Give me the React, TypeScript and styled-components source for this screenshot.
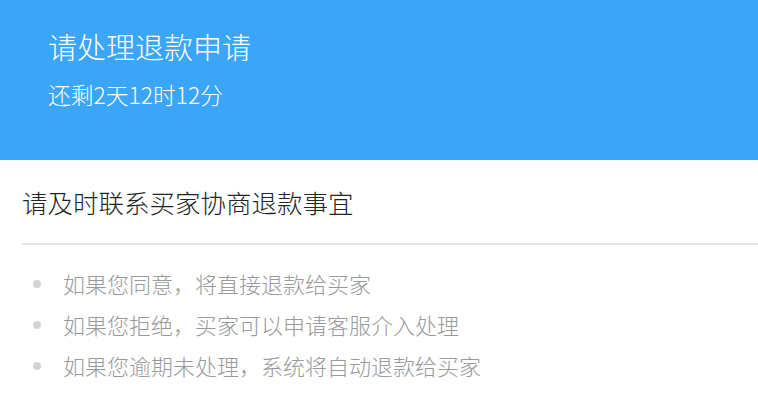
import React from "react";
import styled, { createGlobalStyle } from "styled-components";

const GlobalStyle = createGlobalStyle`
  html, body {
    margin: 0;
    padding: 0;
    background: #ffffff;
    font-family: "Noto Sans CJK SC", "Noto Sans", sans-serif;
  }
`;

const tips = [
  "如果您同意，将直接退款给买家",
  "如果您拒绝，买家可以申请客服介入处理",
  "如果您逾期未处理，系统将自动退款给买家",
];

const App: React.FC = () => {
  return (
    <Page>
      <GlobalStyle />
      <Header>
        <Title>请处理退款申请</Title>
        <Countdown>还剩2天12时12分</Countdown>
      </Header>
      <Section>
        <SectionTitle>请及时联系买家协商退款事宜</SectionTitle>
        <Divider />
        <TipList>
          {tips.map((tip) => (
            <TipItem key={tip}>
              <Dot />
              <TipText>{tip}</TipText>
            </TipItem>
          ))}
        </TipList>
      </Section>
    </Page>
  );
};

const Page = styled.div`
  width: 758px;
  height: 400px;
  overflow: hidden;
  background: #ffffff;
  font-weight: 300;
`;

const Header = styled.div`
  height: 160px;
  box-sizing: border-box;
  padding: 26px 0 0 48px;
  background: #3ba6f8;
  display: flex;
  flex-direction: column;
  gap: 14px;
`;

const Title = styled.div`
  color: #ffffff;
  font-size: 29px;
  line-height: 40px;
`;

const Countdown = styled.div`
  color: #ffffff;
  font-size: 22.8px;
  line-height: 30px;
`;

const Section = styled.div`
  padding: 22px 0 0 22px;
  background: linear-gradient(#fbfbfa, #ffffff 14px);
`;

const SectionTitle = styled.div`
  color: #222426;
  font-size: 25.5px;
  line-height: 40px;
`;

const Divider = styled.div`
  margin-top: 21px;
  height: 2px;
  background: #e6e6e6;
`;

const TipList = styled.ul`
  list-style: none;
  margin: 0;
  padding: 18px 0 0 0;
`;

const TipItem = styled.li`
  display: flex;
  align-items: center;
  height: 41px;
`;

const Dot = styled.span`
  width: 8px;
  height: 8px;
  border-radius: 50%;
  background: #d4d4d4;
  margin: 0 22px 0 11px;
  flex-shrink: 0;
`;

const TipText = styled.span`
  color: #9a9a9a;
  font-size: 22px;
  line-height: 41px;
`;

export default App;
